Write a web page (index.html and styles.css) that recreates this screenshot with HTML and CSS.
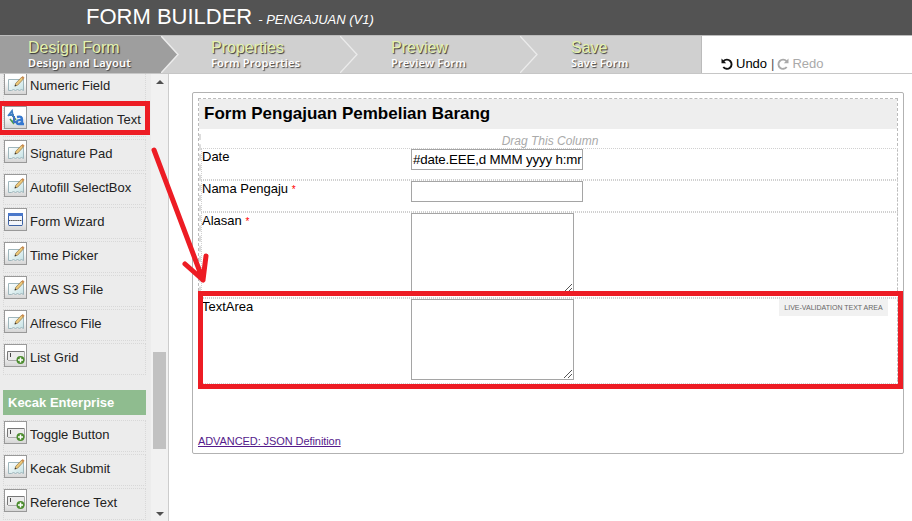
FILE: index.html
```html
<!DOCTYPE html>
<html lang="en">
<head>
<meta charset="utf-8">
<title>Form Builder</title>
<link rel="stylesheet" href="styles.css">
</head>
<body>
<svg class="defs" aria-hidden="true">
  <defs>
    <linearGradient id="sheet" x1="0" y1="0" x2="1" y2="1"><stop offset="0" stop-color="#fff"/><stop offset="1" stop-color="#c5e2e4"/></linearGradient>
    <symbol id="edit" viewBox="0 0 21 21">
      <path d="M3.500 6.500h15v11l-2-1-2 1-2-1-2 1-2-1-2 1-3 0z" fill="url(#sheet)" stroke="#9fb6bc"/>
      <path d="M10 13l.8-2.800 6-6.200 1.800 1.800-6 6.400z" fill="#edc878" stroke="#8c7448" stroke-width=".7"/>
      <path d="M16.300 4.500l1.400-1.500 1.800 1.800-1.400 1.500z" fill="#c98b50"/>
      <path d="M9.500 13.600l.7-2 1.300 1.200z" fill="#333"/>
    </symbol>
    <symbol id="field" viewBox="0 0 21 21">
      <path d="M3 7h16v8H3z" fill="#ececec"/>
      <path d="M2.500 15v-8.500h17" fill="none" stroke="#777"/>
      <path d="M3 15.500h16.500v-8.500" fill="none" stroke="#aaa"/>
      <path d="M5.500 8v4" stroke="#444"/>
      <circle cx="15.500" cy="15" r="4" fill="#4c8c2f"/>
      <path d="M15.500 12.500v5M13 15h5" stroke="#fff" stroke-width="1.500"/>
    </symbol>
    <symbol id="wizard" viewBox="0 0 21 21">
      <rect x="3.500" y="4.500" width="14" height="12" rx="1" fill="#f3f6fc" stroke="#3c62a5"/>
      <path d="M3 4h15v3H3z" fill="#4a78ca"/>
      <path d="M4 11.500h13" stroke="#444" stroke-dasharray="1.500 .6"/>
      <path d="M4 16.500h13" stroke="#3c62a5"/>
    </symbol>
    <symbol id="live" viewBox="0 0 21 21">
      <path d="M3 9l4-5 1 6M4 8h5" fill="none" stroke="#3f7fc4" stroke-width="1.800"/>
      <path d="M12 10c4-1 5 0 5 3v4h2M17 13c-6-1-7 4-3 4 2 0 3-1 3-3" fill="none" stroke="#3478d0" stroke-width="2.400"/>
      <path d="M5 12l4 5M8 9l3 4M7 14l5 1" stroke="#4b9a53" stroke-width="1.500"/>
      <path d="M9 9v6h4" fill="none" stroke="#3d70c4" stroke-width="2"/>
    </symbol>
  </defs>
</svg>
<header class="header"><h1>FORM BUILDER</h1><em>- PENGAJUAN (V1)</em></header>
<nav class="steps">
  <div class="step active"><b>Design Form</b><span>Design and Layout</span>
    <svg class="chev" viewBox="0 0 20 37"><path d="M0 0L17 18.500L0 37z" fill="#9e9e9e"/><path d="M0 0L17 18.500L0 37" fill="none" stroke="#ececec" stroke-width="1.500"/></svg></div>
  <div class="step"><b>Properties</b><span>Form Properties</span>
    <svg class="chev" viewBox="0 0 20 37"><path d="M0 0L17 18.500L0 37" fill="none" stroke="#ebebeb" stroke-width="1.300"/></svg></div>
  <div class="step"><b>Preview</b><span>Preview Form</span>
    <svg class="chev" viewBox="0 0 20 37"><path d="M0 0L17 18.500L0 37" fill="none" stroke="#ebebeb" stroke-width="1.300"/></svg></div>
  <div class="step last"><b>Save</b><span>Save Form</span></div>
  <div class="history">
    <svg class="hist" viewBox="0 0 12 12"><path d="M2.500 3.200A4.600 4.600 0 1 1 2.300 9" fill="none" stroke="#111" stroke-width="1.900"/><path d="M.5 .5v4.700h4.700z" fill="#111"/></svg>
    <span class="undo">Undo</span><span class="bar">|</span>
    <svg class="hist" viewBox="0 0 12 12"><path d="M9.500 3.200A4.600 4.600 0 1 0 9.700 9" fill="none" stroke="#aaa" stroke-width="1.900"/><path d="M11.500 .5v4.700h-4.700z" fill="#aaa"/></svg>
    <span class="redo">Redo</span>
  </div>
</nav>
<div class="main">
  <aside class="sidebar">
    <ul class="palette">
      <li><svg><use href="#edit"/></svg><span>Numeric Field</span></li>
      <li><svg><use href="#live"/></svg><span>Live Validation Text</span></li>
      <li><svg><use href="#edit"/></svg><span>Signature Pad</span></li>
      <li><svg><use href="#edit"/></svg><span>Autofill SelectBox</span></li>
      <li><svg><use href="#wizard"/></svg><span>Form Wizard</span></li>
      <li><svg><use href="#edit"/></svg><span>Time Picker</span></li>
      <li><svg><use href="#edit"/></svg><span>AWS S3 File</span></li>
      <li><svg><use href="#edit"/></svg><span>Alfresco File</span></li>
      <li><svg><use href="#field"/></svg><span>List Grid</span></li>
    </ul>
    <h2>Kecak Enterprise</h2>
    <ul class="palette">
      <li><svg><use href="#field"/></svg><span>Toggle Button</span></li>
      <li><svg><use href="#edit"/></svg><span>Kecak Submit</span></li>
      <li><svg><use href="#field"/></svg><span>Reference Text</span></li>
    </ul>
  </aside>
  <div class="scroll"><i class="up"></i><i class="thumb"></i><i class="down"></i></div>
  <main class="canvas">
    <div class="panel">
      <section class="section">
        <h3>Form Pengajuan Pembelian Barang</h3>
        <div class="column">
          <p class="drag">Drag This Column</p>
          <div class="row"><label>Date</label><div class="input">#date.EEE,d MMM yyyy h:mr</div></div>
          <div class="row"><label>Nama Pengaju <i>*</i></label><div class="input"></div></div>
          <div class="row tall"><label>Alasan <i>*</i></label><div class="area"><svg viewBox="0 0 8 8"><path d="M0 8L8 0M4 8L8 4" stroke="#555"/></svg></div></div>
          <div class="row tall"><label>TextArea</label><div class="area"><svg viewBox="0 0 8 8"><path d="M0 8L8 0M4 8L8 4" stroke="#555"/></svg></div><span class="tag">LIVE-VALIDATION TEXT AREA</span></div>
        </div>
      </section>
      <a class="json">ADVANCED: JSON Definition</a>
    </div>
  </main>
</div>
<div class="mark mark-item"></div>
<div class="mark mark-row"></div>
<svg class="arrow" viewBox="0 0 60 150"><path d="M9 10L58 140M40 124L58 140L61 116" fill="none" stroke="#ed1c24" stroke-width="5" stroke-linecap="round" stroke-linejoin="round"/></svg>
</body>
</html>
```
FILE: styles.css
```css
* { box-sizing: border-box; }
body { margin: 0; width: 912px; height: 521px; overflow: hidden; background: #fff; color: #000; font: 13px/16px "Liberation Sans", Arial, sans-serif; position: relative; }
h1, h2, h3, p, ul { margin: 0; padding: 0; }
.defs { position: absolute; width: 0; height: 0; }
.header { height: 35px; background: #535353; color: #fff; padding-left: 86px; display: flex; align-items: baseline; gap: 6px; line-height: 33px; }
.header h1 { font-size: 22px; font-weight: 400; }
.header em { font-size: 13px; }

.steps { height: 39px; display: flex; border-top: 1px solid #bcbcbc; border-bottom: 1px solid #c6c6c6; }
.step { width: 180px; background: #d0d0d0; padding: 3px 0 0 31px; position: relative; display: flex; flex-direction: column; }
.step.active { width: 161px; background: #9e9e9e; padding-left: 28px; margin-right: 19px; box-shadow: 19px 0 #d0d0d0; }
.step.last { width: 162px; border-right: 1px solid #bbb; }
.step b { font-size: 16px; line-height: 17px; font-weight: 400; color: #e5f2ae; text-shadow: 1px 1px 1px #333; }
.step span { font: 600 11px/14px "Noto Sans", sans-serif; letter-spacing: .18px; color: #fff; text-shadow: 1px 1px 1px #444; }
.chev { position: absolute; width: 20px; height: 37px; right: -20px; top: 0; z-index: 1; }
.step:not(.active) .chev { right: 0; }
.history { display: flex; align-items: center; padding: 18px 0 0 19px; }
.hist { width: 12px; height: 12px; }
.undo { margin-left: 3px; }
.bar { margin: 0 3px 0 4px; color: #555; }
.redo { color: #aaa; margin-left: 3px; }

.main { display: flex; height: 447px; }
.sidebar { width: 151px; background: #ececec; overflow: hidden; padding-left: 3px; }
.sidebar .palette:first-child { margin-top: -3px; }
.palette { list-style: none; width: 143px; display: grid; gap: 2px; }
.palette li { height: 32px; border: 1px dotted #d8d8d8; display: flex; color: #222; }
.palette svg { width: 23px; height: 23px; border: 1px solid #999; background: linear-gradient(#fff 40%, #d6d6d6); flex: none; }
.palette span { margin: 6px 0 0 3px; white-space: nowrap; line-height: 16px; }
.sidebar h2 { width: 143px; height: 25px; background: #8fbc8f; color: #fff; font-size: 13px; line-height: 25px; padding-left: 5px; margin: 15px 0 5px; }
.scroll { width: 18px; background: #f1f1f1; border-right: 1px solid #ccc; display: flex; flex-direction: column; align-items: center; }
.scroll i { display: block; }
.up { margin-top: 6px; border: 4px solid transparent; border-top: 0; border-bottom-color: #505050; }
.thumb { width: 13px; height: 97px; background: #c1c1c1; margin-top: 268px; }
.down { margin-top: 63px; border: 4px solid transparent; border-bottom: 0; border-top-color: #505050; }

.canvas { padding: 18px 0 0 23px; }
.panel { width: 712px; height: 362px; border: 1px solid #b2b2b2; border-radius: 2px; padding: 5px; }
.section { width: 700px; border: 1px dashed #bbb; border-bottom: 0; height: 288px; }
.section h3 { height: 30px; background: #eee; font-size: 17px; line-height: 30px; padding-left: 5px; }
.column { margin-top: 5px; width: 699px; border-left: 2px dashed #ddd; }
.drag { height: 14px; line-height: 15px; font-size: 12px; font-style: italic; color: #aaa; text-align: center; padding-left: 1px; }
.row { height: 32px; border: 1px dotted #d0d0d0; display: flex; align-items: flex-start; }
.row.tall { height: 86px; }
.row label { width: 209px; }
.row label i { color: #f00; font-style: normal; font-size: 10px; }
.input { width: 172px; height: 21px; border: 1px solid #a5a5a5; background: #fff; padding: 0 1px; font-size: 13.33px; letter-spacing: -.16px; line-height: 20px; white-space: nowrap; overflow: hidden; }
.area { width: 163px; height: 81px; border: 1px solid #a5a5a5; background: #fff; display: flex; justify-content: flex-end; align-items: flex-end; padding: 1px; }
.area svg { width: 8px; height: 8px; }
.tag { margin-left: 205px; width: 109px; height: 17px; background: #f1f1f1; color: #666; font-size: 7px; line-height: 17px; text-align: center; white-space: nowrap; }
.json { display: block; margin-top: 48px; font-size: 11px; line-height: 14px; letter-spacing: -.08px; color: #551a8b; text-decoration: underline; }

.mark { position: absolute; border: 5px solid #ed1c24; }
.mark-item { left: -3px; top: 101px; width: 153px; height: 34px; }
.mark-row { left: 198px; top: 291px; width: 705px; height: 98px; }
.arrow { position: absolute; left: 145px; top: 140px; width: 60px; height: 150px; overflow: visible; }
```
